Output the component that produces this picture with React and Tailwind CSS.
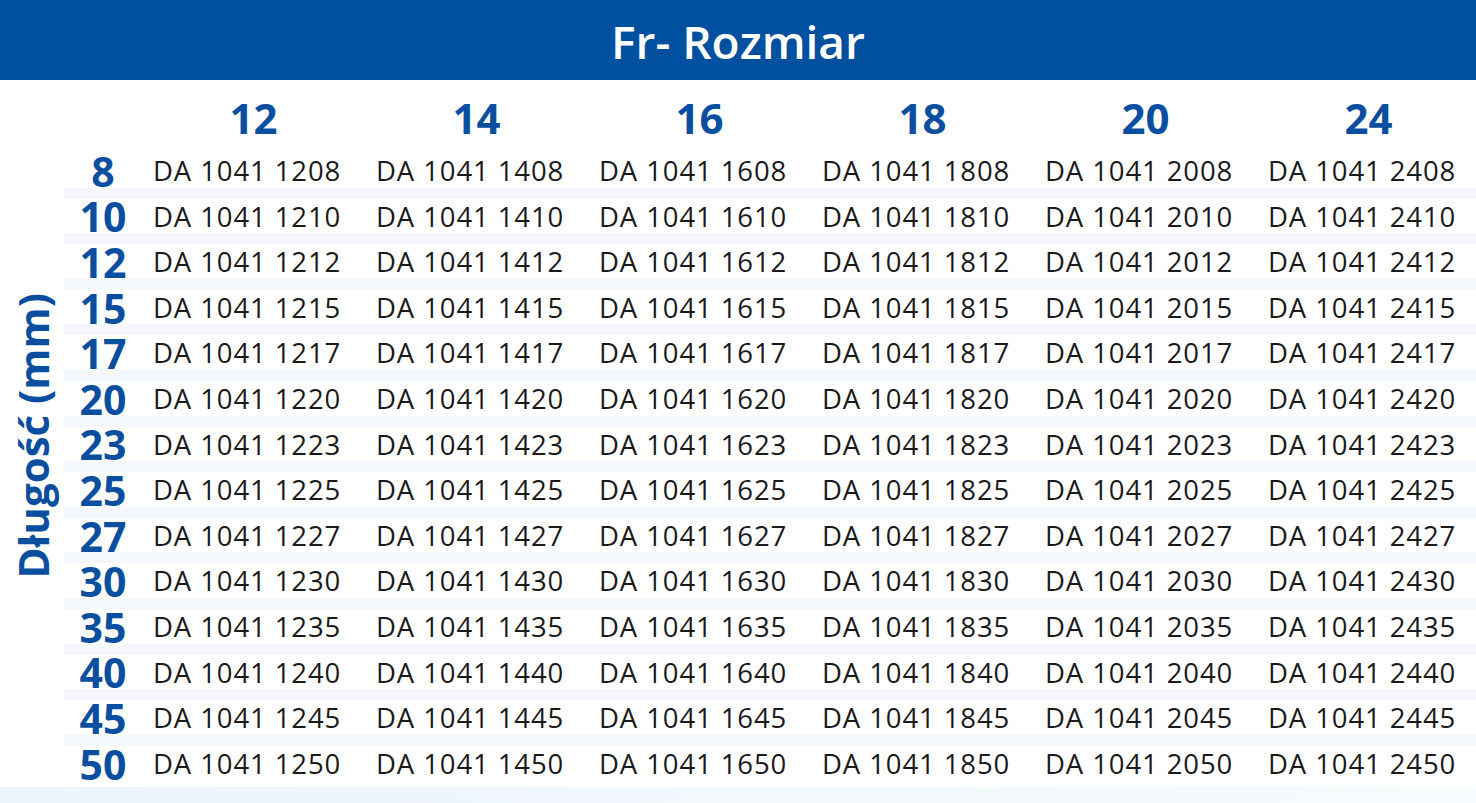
const sizes = ["12", "14", "16", "18", "20", "24"];
const lengths = ["08", "10", "12", "15", "17", "20", "23", "25", "27", "30", "35", "40", "45", "50"];

const App = () => {
    return (
        <div className="w-[1476px] h-[803px] bg-white overflow-hidden flex flex-col font-['Open_Sans',sans-serif]">
            {/* title bar */}
            <div className="h-[80px] bg-[#0050a0] flex items-center justify-center">
                <h1 className="text-white text-[46px] font-semibold leading-none pt-[2px]">Fr- Rozmiar</h1>
            </div>

            <div className="flex h-[707px]">
                {/* rotated axis label */}
                <div className="w-[64px] shrink-0 flex items-center justify-center">
                    <span className="[writing-mode:vertical-rl] rotate-180 text-[#0a4f9f] text-[42px] font-bold leading-none ml-[2px] mt-[4px] whitespace-nowrap">
                        Długość (mm)
                    </span>
                </div>

                <div className="flex-1 min-w-0 flex flex-col">
                    {/* column sizes */}
                    <div className="h-[68px] flex items-center">
                        <div className="w-[78px] shrink-0"></div>
                        {sizes.map((s) => (
                            <div key={s} className="w-[223px] shrink-0 text-center text-[#0a4f9f] text-[42px] font-bold leading-none pt-[8px]">
                                {s}
                            </div>
                        ))}
                    </div>

                    {lengths.map((l, i) => (
                        <div
                            key={l}
                            className={
                                "h-[45.6px] flex items-center " +
                                (i === 0
                                    ? "bg-[linear-gradient(to_bottom,transparent_0,transparent_calc(100%-6px),#f4f8fc_calc(100%-6px))]"
                                    : i === lengths.length - 1
                                    ? "bg-[linear-gradient(to_bottom,#f4f8fc_0,#f4f8fc_5px,transparent_5px)]"
                                    : "bg-[linear-gradient(to_bottom,#f4f8fc_0,#f4f8fc_5px,transparent_5px,transparent_calc(100%-6px),#f4f8fc_calc(100%-6px))]")
                            }
                        >
                            <div className="w-[78px] shrink-0 text-center text-[#0a4f9f] text-[41px] font-bold leading-[40px]">
                                {parseInt(l, 10)}
                            </div>
                            {sizes.map((s) => (
                                <div key={s} className="w-[223px] shrink-0 pl-[11px] text-[#1a1a1a] text-[27.5px] leading-none tracking-[0.9px] whitespace-nowrap">
                                    DA 1041 {s}{l}
                                </div>
                            ))}
                        </div>
                    ))}
                </div>
            </div>

            {/* bottom band */}
            <div className="flex-1 bg-[linear-gradient(to_right,#ecf4fb,#f3f8fc_60%,#f8fbfd)]"></div>
        </div>
    )
}

export default App
